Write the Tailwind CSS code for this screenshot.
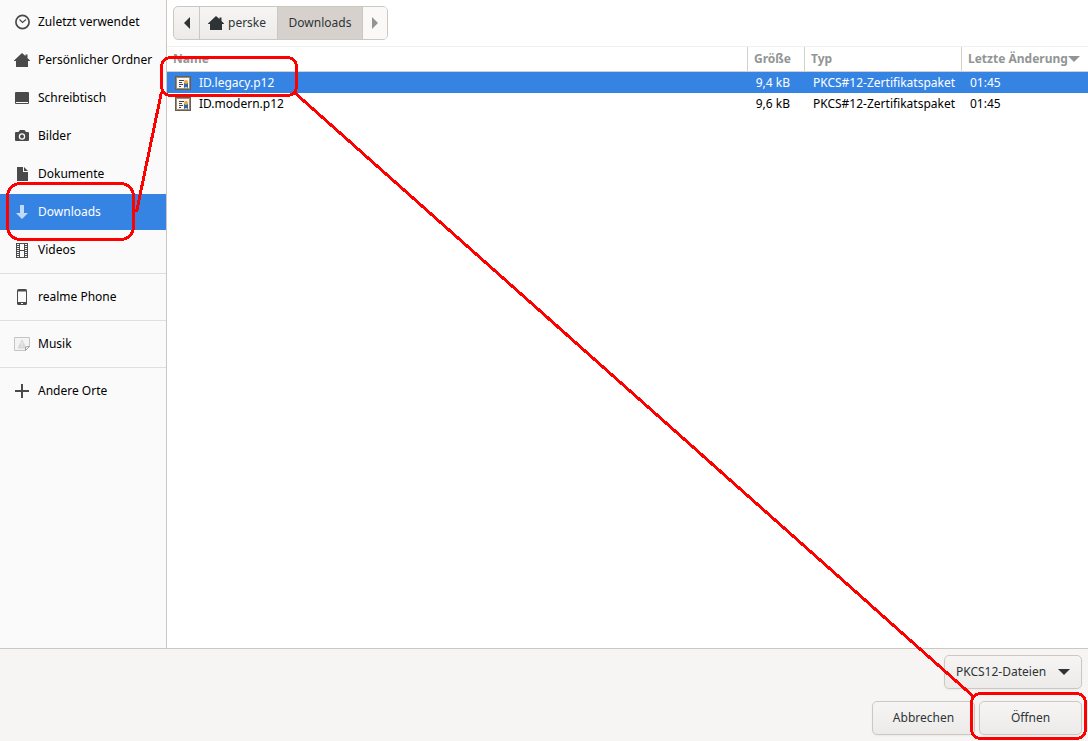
<!DOCTYPE html>
<html lang="de">
<head>
    <meta charset="UTF-8">
    <meta name="viewport" content="width=device-width, initial-scale=1.0">
    <title>Datei öffnen</title>
    <script src="https://cdn.jsdelivr.net/npm/@tailwindcss/browser@4"></script>
</head>
<body class="relative min-h-screen flex flex-col overflow-x-hidden bg-white text-black text-[12px] leading-[18px] font-['Noto_Sans','Open_Sans',sans-serif]">

    <div class="flex flex-1">
        <!-- Places -->
        <nav class="w-[167px] shrink-0 flex flex-col gap-0.5 pt-1 bg-[#fafafa] border-r border-[#cdc7c2]">
            <a href="#" class="flex items-center gap-2 h-9 pl-3.5 whitespace-nowrap">
                <svg class="size-4 shrink-0" viewBox="0 0 16 16" fill="none" stroke="#4a4a4a"><circle cx="8.500" cy="8" r="6.600" stroke-width="1.700"/><path d="M5.500 5.500L8.500 8.500L12 5.500" stroke-width="1.200"/></svg>
                Zuletzt verwendet
            </a>
            <a href="#" class="flex items-center gap-2 h-9 pl-3.5 whitespace-nowrap">
                <svg class="size-4 shrink-0" viewBox="0 0 16 16" fill="#4a4a4a"><path d="M8 1L11.500 4V2.500H13.500V6L16 8.500V9H14V15H2V9H0V8.500z"/></svg>
                Persönlicher Ordner
            </a>
            <a href="#" class="flex items-center gap-2 h-9 pl-3.5 whitespace-nowrap">
                <svg class="size-4 shrink-0" viewBox="0 0 16 16"><rect x="1" y="2" width="14" height="12" rx="1" fill="#4a4a4a"/><path d="M2 12.500H14" stroke="#fafafa"/></svg>
                Schreibtisch
            </a>
            <a href="#" class="flex items-center gap-2 h-9 pl-3.5 whitespace-nowrap">
                <svg class="size-4 shrink-0" viewBox="0 0 16 16"><path d="M2 4H4.500L6 2H10.500L12 4H14Q15 4 15 5V12Q15 13 14 13H2Q1 13 1 12V5Q1 4 2 4z" fill="#4a4a4a"/><circle cx="8" cy="8.500" r="3.200" fill="#fafafa"/><circle cx="8" cy="8.500" r="1.900" fill="#4a4a4a"/></svg>
                Bilder
            </a>
            <a href="#" class="flex items-center gap-2 h-9 pl-3.5 whitespace-nowrap">
                <svg class="size-4 shrink-0" viewBox="0 0 16 16" fill="#4a4a4a"><path d="M3 1H9V6H14V15H3z"/><path d="M10 1L14 5H10z"/></svg>
                Dokumente
            </a>
            <a href="#" class="flex items-center gap-2 h-9 pl-3.5 whitespace-nowrap bg-[#3584e4] text-white">
                <svg class="size-4 shrink-0" viewBox="0 0 16 16" fill="#c2daf7"><path d="M6 1H10V9H14L8 15L2 9H6z"/></svg>
                Downloads
            </a>
            <a href="#" class="flex items-center gap-2 h-9 pl-3.5 whitespace-nowrap">
                <svg class="size-4 shrink-0" viewBox="0 0 16 16"><path d="M2 1H14V16H2z" fill="#4a4a4a"/><path d="M6 2H10V8H6zM6 9H10V15H6z" fill="#fafafa"/><path d="M4 2V15M12 2V15" stroke="#fafafa" stroke-width="2" stroke-dasharray="1 1"/></svg>
                Videos
            </a>
            <hr class="my-[3px] border-[#dfdfdf]">
            <a href="#" class="flex items-center gap-2 h-9 pl-3.5 whitespace-nowrap">
                <svg class="size-4 shrink-0" viewBox="0 0 16 16"><rect x="3" y="0" width="10" height="16" rx="1.500" fill="#4a4a4a"/><path d="M4 2.500H12V13H4z" fill="#fafafa"/><path d="M7 14.500H9" stroke="#fafafa"/></svg>
                realme Phone
            </a>
            <hr class="my-[3px] border-[#dfdfdf]">
            <a href="#" class="flex items-center gap-2 h-9 pl-3.5 whitespace-nowrap">
                <svg class="size-4 shrink-0" viewBox="0 0 16 16"><path d="M.5 1.500H15.500V10.500L11.500 14.500H.5z" fill="#f4f4f4" stroke="#c4c4c4"/><path d="M8 4L12 12H4z" fill="#d8d8d8" stroke="#d8d8d8" stroke-linejoin="round"/><path d="M8 6V9M8 10V11" stroke="#f4f4f4"/><path d="M11.500 14.500V11L15.500 10.500z" fill="#fff" stroke="#a0a0a0"/></svg>
                Musik
            </a>
            <hr class="my-[3px] border-[#dfdfdf]">
            <a href="#" class="flex items-center gap-2 h-9 pl-3.5 whitespace-nowrap">
                <svg class="size-4 shrink-0" viewBox="0 0 16 16" fill="#4a4a4a"><path d="M7 1H9V7H15V9H9V15H7V9H1V7H7z"/></svg>
                Andere Orte
            </a>
        </nav>

        <main class="flex-1 min-w-0">
            <!-- Path bar -->
            <div class="flex p-1.5 border-b border-[#f0f0ef]">
                <div class="flex h-[34px] border border-[#cdc7c2] rounded-[5px] overflow-hidden bg-linear-to-b from-[#f6f5f3] to-[#edebe9] text-[#2e3436]">
                    <button type="button" aria-label="Zurück" class="w-[26px] flex items-center justify-center border-r border-[#cdc7c2]">
                        <svg class="size-3" viewBox="0 0 12 12" fill="#2e3436"><path d="M9 0V12L3 6z"/></svg>
                    </button>
                    <button type="button" class="w-[78px] flex items-center pl-2 gap-1 border-r border-[#cdc7c2]">
                        <svg class="size-4" viewBox="0 0 16 16" fill="#2e3436"><path d="M8 1L11.500 4V2.500H13.500V6L16 8.500V9H14V15H2V9H0V8.500z"/></svg>
                        perske
                    </button>
                    <button type="button" class="w-[85px] bg-[#d6d1cd] border-r border-[#cdc7c2]">Downloads</button>
                    <button type="button" disabled aria-label="Weiter" class="w-6 flex items-center justify-center bg-[#faf9f8]">
                        <svg class="size-3" viewBox="0 0 12 12" fill="#929595"><path d="M3 0V12L9 6z"/></svg>
                    </button>
                </div>
            </div>

            <!-- File list -->
            <table class="w-full table-fixed border-separate border-spacing-0 whitespace-nowrap">
                <colgroup>
                    <col>
                    <col class="w-[57px]">
                    <col class="w-[157px]">
                    <col class="w-[127px]">
                </colgroup>
                <thead>
                    <tr class="h-[25px] text-left text-[#929595]">
                        <th class="p-0 pl-1.5 border-b border-[#d5d0cc]">Name</th>
                        <th class="p-0 pl-1.5 border-b border-l border-[#d5d0cc]">Größe</th>
                        <th class="p-0 pl-1.5 border-b border-l border-[#d5d0cc]">Typ</th>
                        <th class="p-0 pl-1.5 border-b border-l border-[#d5d0cc]">
                            <span class="flex items-center">Letzte Änderung
                                <svg class="w-3 h-1.5" viewBox="0 0 12 6" fill="#929595"><path d="M0 0H12L6 6z"/></svg>
                            </span>
                        </th>
                    </tr>
                </thead>
                <tbody>
                    <tr class="h-[21px] bg-[#3584e4] text-white">
                        <td class="p-0 pl-2">
                            <span class="flex items-center gap-2">
                                <svg class="size-4" viewBox="0 0 16 16"><path d="M0 1H16V15H0z" fill="#6b5c50"/><path d="M1 2H15V14H1z" fill="#a08c7c"/><path d="M2 3H14V13H2z" fill="#f6f6f4"/><path d="M4 5.500H9M4 7.500H7M4 9.500H8M4 11.500H6" stroke="#444"/><path d="M9 8H13V13L11 12L9 13z" fill="#3465a4"/><circle cx="11" cy="7" r="2" fill="#e9a63a"/></svg>
                                ID.legacy.p12
                            </span>
                        </td>
                        <td class="p-0 pr-3.5 text-right">9,4 kB</td>
                        <td class="p-0 pl-[9px]">PKCS#12-Zertifikatspaket</td>
                        <td class="p-0 pl-[9px]">01:45</td>
                    </tr>
                    <tr class="h-[21px]">
                        <td class="p-0 pl-2">
                            <span class="flex items-center gap-2">
                                <svg class="size-4" viewBox="0 0 16 16"><path d="M0 1H16V15H0z" fill="#6b5c50"/><path d="M1 2H15V14H1z" fill="#a08c7c"/><path d="M2 3H14V13H2z" fill="#f6f6f4"/><path d="M4 5.500H9M4 7.500H7M4 9.500H8M4 11.500H6" stroke="#444"/><path d="M9 8H13V13L11 12L9 13z" fill="#3465a4"/><circle cx="11" cy="7" r="2" fill="#e9a63a"/></svg>
                                ID.modern.p12
                            </span>
                        </td>
                        <td class="p-0 pr-3.5 text-right">9,6 kB</td>
                        <td class="p-0 pl-[9px]">PKCS#12-Zertifikatspaket</td>
                        <td class="p-0 pl-[9px]">01:45</td>
                    </tr>
                </tbody>
            </table>
        </main>
    </div>

    <!-- Filter and actions -->
    <footer class="flex flex-col items-end gap-3 p-1.5 bg-[#f6f5f3] border-t border-[#cdc7c2] text-[#2e3436]">
        <div class="relative">
            <select aria-label="Dateityp" class="appearance-none w-[138px] h-[34px] pl-[11px] border border-[#cdc7c2] rounded-[5px] bg-linear-to-b from-[#f6f5f3] to-[#edebe9] shadow-xs">
                <option>PKCS12-Dateien</option>
            </select>
            <svg class="absolute right-3 top-3.5 w-3 h-1.5 pointer-events-none" viewBox="0 0 12 6" fill="#2e3436"><path d="M0 0H12L6 6z"/></svg>
        </div>
        <div class="flex gap-1">
            <button type="button" class="w-[103px] h-[34px] border border-[#cdc7c2] rounded-[5px] bg-linear-to-b from-[#f6f5f3] to-[#edebe9] shadow-xs">Abbrechen</button>
            <button type="button" class="w-[103px] h-[34px] border border-[#cdc7c2] rounded-[5px] bg-linear-to-b from-[#f6f5f3] to-[#edebe9] shadow-xs">Öffnen</button>
        </div>
    </footer>

    <!-- Red markers: folder, file, open button -->
    <svg class="absolute left-0 top-0 w-[1088px] h-[741px] pointer-events-none" viewBox="0 0 1088 741" fill="none" stroke="#f00" stroke-width="3" shape-rendering="crispEdges">
        <rect x="7.500" y="183.500" width="126" height="56" rx="13"/>
        <rect x="161.500" y="57.500" width="135" height="38" rx="9"/>
        <rect x="971.500" y="693.500" width="114" height="45" rx="9"/>
        <path d="M161.500 92L136.500 212M295 93L974 697"/>
    </svg>
</body>
</html>
